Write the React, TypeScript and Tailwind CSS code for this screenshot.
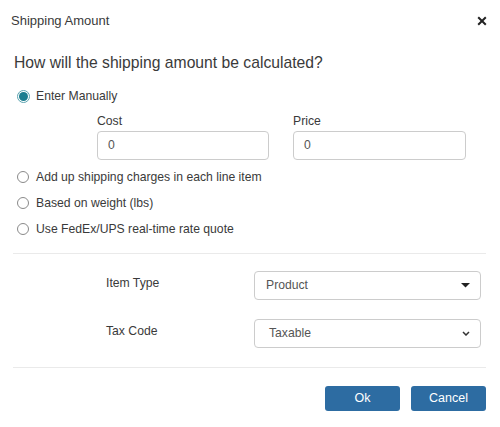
import React from "react";

function Radio({ checked, label }: { checked?: boolean; label: string }) {
  return (
    <div className="flex h-[20px] items-center pl-[4px]">
      {checked ? (
        <span className="flex h-[13px] w-[13px] items-center justify-center rounded-full border border-[#5aa3b0] bg-white">
          <span className="h-[9px] w-[9px] rounded-full bg-[#1b7d8f]" />
        </span>
      ) : (
        <span className="h-[12px] w-[12px] rounded-full border border-[#8a8a8a] bg-white" />
      )}
      <span className={(checked ? "ml-[6px]" : "ml-[7px]") + " text-[12.2px] text-[#3a3a3a]"}>{label}</span>
    </div>
  );
}

export default function App() {
  return (
    <div
      className="h-[427px] w-[500px] bg-white text-[#3a3a3a]"
      style={{ fontFamily: '"Liberation Sans", Arial, sans-serif' }}
    >
      <div className="flex h-[42px] items-center justify-between pl-[11px] pr-[13px]">
        <span className="text-[13px] text-[#3a3a3a]">Shipping Amount</span>
        <svg width="10" height="10" viewBox="0 0 10 10">
          <path d="M1.2 1.2 L8.8 8.8 M8.8 1.2 L1.2 8.8" stroke="#222" strokeWidth="2" />
        </svg>
      </div>
      <div className="flex flex-col pl-[13px] pr-[14px]">
        <div className="mt-[10px] pl-[1px] text-[15.7px] leading-[22px] text-[#3a3a3a]">
          How will the shipping amount be calculated?
        </div>
        <div className="mt-[12px]">
          <Radio checked label="Enter Manually" />
        </div>
        <div className="ml-[84px] mt-[6px] flex gap-[24px]">
          <div className="flex w-[172px] flex-col">
            <span className="h-[18px] text-[12.2px] leading-[18px]">Cost</span>
            <div className="mt-[1px] flex h-[29px] items-center rounded-[4px] border border-[#ccc] pl-[10px] text-[12.2px] text-[#555]">
              0
            </div>
          </div>
          <div className="flex w-[173px] flex-col">
            <span className="h-[18px] text-[12.2px] leading-[18px]">Price</span>
            <div className="mt-[1px] flex h-[29px] items-center rounded-[4px] border border-[#ccc] pl-[10px] text-[12.2px] text-[#555]">
              0
            </div>
          </div>
        </div>
        <div className="mt-[7px] flex flex-col gap-[6px]">
          <Radio label="Add up shipping charges in each line item" />
          <Radio label="Based on weight (lbs)" />
          <Radio label="Use FedEx/UPS real-time rate quote" />
        </div>
        <div className="mt-[14px] h-px bg-[#eaeaea]" />
        <div className="mt-[17px] flex items-center">
          <span className="mb-[4px] w-[241px] pl-[93px] text-[12.2px]">Item Type</span>
          <div className="flex h-[29px] w-[227px] items-center justify-between rounded-[4px] border border-[#ccc] pl-[11px] pr-[10px] text-[12.2px] text-[#555]">
            <span>Product</span>
            <svg width="9" height="5" viewBox="0 0 9 5">
              <path d="M0 0 L9 0 L4.5 4.5 Z" fill="#222" />
            </svg>
          </div>
        </div>
        <div className="mt-[19px] flex items-center">
          <span className="mb-[4px] w-[241px] pl-[93px] text-[12.2px]">Tax Code</span>
          <div className="flex h-[29px] w-[227px] items-center justify-between rounded-[4px] border border-[#ccc] pl-[14px] pr-[10px] text-[12.2px] text-[#555]">
            <span>Taxable</span>
            <svg width="8" height="5" viewBox="0 0 8 5">
              <path d="M1 1 L4 4 L7 1" stroke="#333" strokeWidth="1.5" fill="none" />
            </svg>
          </div>
        </div>
        <div className="mt-[19px] h-px bg-[#eaeaea]" />
        <div className="mt-[18px] flex justify-end gap-[11px]">
          <button className="flex h-[25px] w-[75px] items-center justify-center rounded-[3px] bg-[#2d6ca2] text-[12.5px] text-white">
            Ok
          </button>
          <button className="flex h-[25px] w-[75px] items-center justify-center rounded-[3px] bg-[#2d6ca2] text-[12.5px] text-white">
            Cancel
          </button>
        </div>
      </div>
    </div>
  );
}
